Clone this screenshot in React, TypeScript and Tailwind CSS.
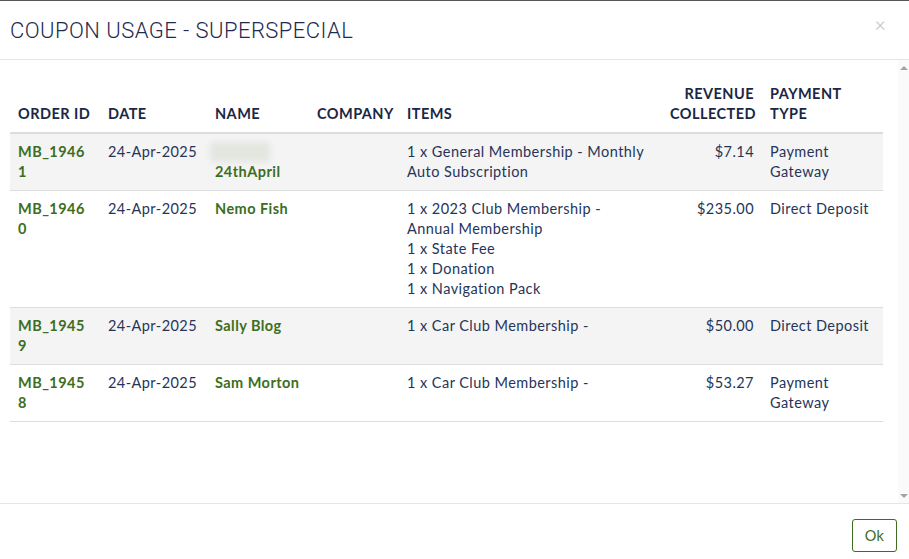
import React from "react";

type Order = {
  id: string;
  date: string;
  name: string;
  blurred?: boolean;
  items: string[];
  revenue: string;
  payment: string;
};

const orders: Order[] = [
  {
    id: "MB_19461",
    date: "24-Apr-2025",
    name: "24thApril",
    blurred: true,
    items: ["1 x General Membership - Monthly Auto Subscription"],
    revenue: "$7.14",
    payment: "Payment Gateway",
  },
  {
    id: "MB_19460",
    date: "24-Apr-2025",
    name: "Nemo Fish",
    items: ["1 x 2023 Club Membership - Annual Membership", "1 x State Fee", "1 x Donation", "1 x Navigation Pack"],
    revenue: "$235.00",
    payment: "Direct Deposit",
  },
  {
    id: "MB_19459",
    date: "24-Apr-2025",
    name: "Sally Blog",
    items: ["1 x Car Club Membership -"],
    revenue: "$50.00",
    payment: "Direct Deposit",
  },
  {
    id: "MB_19458",
    date: "24-Apr-2025",
    name: "Sam Morton",
    items: ["1 x Car Club Membership -"],
    revenue: "$53.27",
    payment: "Payment Gateway",
  },
];

export default function App() {
  return (
    <div
      className="w-[909px] h-[559px] flex flex-col bg-white border-t border-[#555] overflow-hidden text-[14.5px] tracking-[0.45px] text-[#26345a]"
      style={{ fontFamily: "Lato, 'Open Sans', sans-serif" }}
    >
      {/* header */}
      <div className="h-[59px] shrink-0 flex items-center justify-between pl-[10px] pr-[23px] border-b border-[#e5e5e5]">
        <h2
          className="text-[22px] font-light text-[#1f2b4d] tracking-[0.45px]"
          style={{ fontFamily: "Roboto, sans-serif" }}
        >
          COUPON USAGE - SUPERSPECIAL
        </h2>
        <span
          className="-mt-[12px] text-[20px] leading-none font-light text-[#c8c8c8]"
          style={{ fontFamily: "Roboto, sans-serif" }}
        >
          ×
        </span>
      </div>

      {/* body */}
      <div className="flex-1 flex min-h-0">
        <div className="flex-1 pl-[10px] pt-[16px]">
          <table className="table-fixed w-[873px] border-collapse">
            <colgroup>
              <col className="w-[90px]" />
              <col className="w-[107px]" />
              <col className="w-[102px]" />
              <col className="w-[90px]" />
              <col className="w-[263px]" />
              <col className="w-[100px]" />
              <col className="w-[121px]" />
            </colgroup>
            <thead>
              <tr className="border-b-2 border-[#dddddd] text-[#1b2745] font-bold leading-5">
                <th className="p-2 text-left align-bottom">ORDER ID</th>
                <th className="p-2 text-left align-bottom">DATE</th>
                <th className="p-2 text-left align-bottom">NAME</th>
                <th className="p-2 text-left align-bottom">COMPANY</th>
                <th className="p-2 text-left align-bottom">ITEMS</th>
                <th className="p-2 text-right align-bottom">REVENUE COLLECTED</th>
                <th className="p-2 text-left align-bottom">PAYMENT TYPE</th>
              </tr>
            </thead>
            <tbody>
              {orders.map((o, i) => (
                <tr
                  key={o.id}
                  className={`border-b border-[#dddddd] leading-5 ${i % 2 === 0 ? "bg-[#f4f4f4]" : "bg-white"}`}
                >
                  <td className="p-2 align-top font-bold text-[#3c6e22]">
                    <div className="w-[68px] break-all">{o.id}</div>
                  </td>
                  <td className="p-2 align-top">{o.date}</td>
                  <td className="p-2 align-top font-bold text-[#3c6e22]">
                    {o.blurred && <div className="h-5 w-[60px] -ml-[5px] rounded-sm bg-[#e2e6df] blur-[3px]" />}
                    {o.name}
                  </td>
                  <td className="p-2 align-top"></td>
                  <td className="py-2 pl-2 pr-4 align-top">
                    {o.items.map((it) => (
                      <div key={it}>{it}</div>
                    ))}
                  </td>
                  <td className="p-2 align-top text-right">{o.revenue}</td>
                  <td className="p-2 align-top">{o.payment}</td>
                </tr>
              ))}
            </tbody>
          </table>
        </div>
        {/* scrollbar */}
        <div className="w-[11px] shrink-0 bg-[#fafafa] flex flex-col items-center justify-between pt-[6px] pb-[5px]">
          <div className="w-0 h-0 border-l-[4px] border-r-[4px] border-b-[4px] border-l-transparent border-r-transparent border-b-[#a3a3a3]" />
          <div className="w-0 h-0 border-l-[4px] border-r-[4px] border-t-[4px] border-l-transparent border-r-transparent border-t-[#a3a3a3]" />
        </div>
      </div>

      {/* footer */}
      <div className="h-[56px] shrink-0 border-t border-[#e5e5e5] flex items-start justify-end pt-[15px] pr-[12px]">
        <button className="w-[45px] h-[33px] rounded-[3px] border border-[#3c6e22] text-[#3c6e22] text-[14.5px] bg-white">
          Ok
        </button>
      </div>
    </div>
  );
}
